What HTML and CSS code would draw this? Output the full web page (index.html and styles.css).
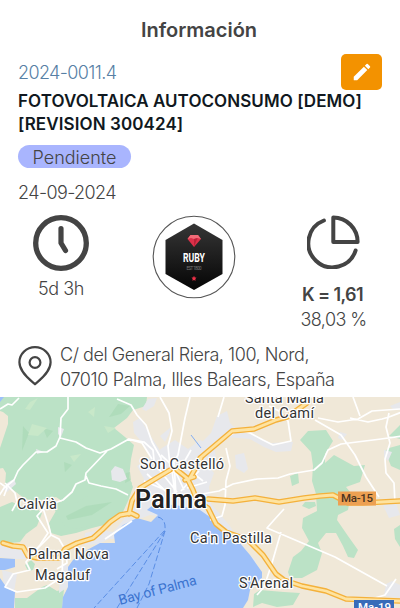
FILE: index.html
```html
<!DOCTYPE html>
<html lang="es">
<head>
<meta charset="utf-8">
<title>Información</title>
<link rel="stylesheet" href="styles.css">
</head>
<body>
<main class="screen">
  <h1 class="heading"><span>Información</span></h1>
  <section class="project">
    <button class="edit" aria-label="Editar">
      <svg width="22" height="22" viewBox="0 0 24 24"><path fill="#fff" d="M3 17.25V21h3.75L17.8 9.94l-3.75-3.75zM20.7 7.04a1 1 0 0 0 0-1.41l-2.34-2.34a1 1 0 0 0-1.41 0l-1.83 1.83 3.75 3.75z"/></svg>
    </button>
    <div class="code"><span>2024-0011.4</span></div>
    <div class="name"><span class="name-a">FOTOVOLTAICA AUTOCONSUMO [DEMO]</span><br><span class="name-b">[REVISION 300424]</span></div>
    <div class="badge"><span>Pendiente</span></div>
    <div class="date"><span>24-09-2024</span></div>
  </section>
  <section class="stats">
    <div class="stat time">
      <svg width="56" height="56" viewBox="0 0 56 56" fill="none" stroke="#444" stroke-linecap="round" stroke-linejoin="round"><circle cx="28" cy="28" r="25.3" stroke-width="5.3"/><path stroke-width="5.2" d="M28 13.5V28l4.5 7.5"/></svg>
      <span class="elapsed">5d 3h</span>
    </div>
    <div class="stat avatar">
      <svg width="84" height="84" viewBox="0 0 84 84">
        <defs><linearGradient id="hex" x1="0" y1="0" x2="0" y2="1"><stop offset="0" stop-color="#363636"/><stop offset="1" stop-color="#050505"/></linearGradient></defs>
        <circle cx="42" cy="42" r="40.8" fill="#fff" stroke="#555" stroke-width="1.1"/>
        <path fill="url(#hex)" d="M42 8.5 70.5 25v34L42 75 13.500 59V25z"/>
        <path fill="#dc3049" d="m35.500 24 3-4h7.500l3 4-7 8z"/><path fill="#f26b78" d="m35.500 24 3-4h7.500l3 4-3.500-1-3.500 1-3-1z"/><path fill="#b92239" d="m42 24 3.500-1-3.500 9z"/>
        <text class="logo-name" x="42" y="46.500" text-anchor="middle" textLength="22" lengthAdjust="spacingAndGlyphs">RUBY</text>
        <text class="logo-sub" x="42" y="54.500" text-anchor="middle" textLength="15">EST 1800</text>
        <path fill="#ee3048" d="m42 60.800.8 1.600 1.700.2-1.200 1.300.3 1.800-1.600-.8-1.600.8.3-1.800-1.200-1.300 1.700-.2z"/>
      </svg>
    </div>
    <div class="stat ratio">
      <svg width="54" height="54" viewBox="0 0 54 54" fill="none" stroke="#444" stroke-width="4" stroke-linecap="round" stroke-linejoin="round"><path d="M27 2.500V27h24.300A24.500 24.500 0 0 0 27 2.500zM17.600 5.500A24.200 24.200 0 1 0 49.300 35.500" transform="translate(-.7 0)"/></svg>
      <b class="factor">K = 1,61</b>
      <span class="percent">38,03 %</span>
    </div>
  </section>
  <section class="address">
    <svg width="34" height="40" viewBox="0 0 34 40" fill="none" stroke="#444" stroke-width="2.200" stroke-linejoin="round"><path d="M17 38.300C13 34.500 1.400 26.500 1.400 16.300a15.600 15.100 0 0 1 31.200 0C32.600 26.500 21 34.500 17 38.300z"/><circle cx="17" cy="16.500" r="5.400"/></svg>
    <div class="lines"><span class="line-a">C/ del General Riera, 100, Nord,</span><br><span class="line-b">07010 Palma, Illes Balears, España</span></div>
  </section>
  <svg class="map" width="400" height="211" viewBox="0 397 400 211">
    <rect y="397" width="400" height="211" fill="#f0e8d8"/>
    <g fill="#bbe2c6">
      <path d="M7 397H147l-1 9-13 4-6 8-13 10 11 9 9 8-3 14-2 19 4 9-5 14-6 13-14 10-16 4-16 5-15 3-10-3-2-10 8-14 5-8-6-4-20 4-11-2-13-10-7-4 1-12-3-5-8 1-8 5L0 470V448l8-24V416l-5-4-3-1V397z"/>
      <path d="M0 507l12-5 12 5 12 1 6 5-5 13-11 8-6 8L0 544zM31 560l4 4-2 6-5 1-3-6zM15 598l12 0 15-11 5-2 10 6 7-2-2 19H15z"/>
      <path d="M50 500l24 4 15-9 13-12 10-6 15-2 5 8-4 12-7 12-12 12-13 6-20 4-11-3-8-12z"/>
      <path d="M300 440l8-9 18-1 7 11-8 13v9l9-8 20 11 11-1-5 17-14 5 5 6-3 17-10 5-1 5 11 16 10 14-4 8-6-1-5-11-7-13-10 0-8 10 4 10-5 17-15 8-12 0-2-6 5-15 8-6 8-10-7-13 1-10 14-7-1-17-4-13 1-15-2-14zM290 476l8-3 1 10-7 3zM400 425v14l-11-3zM389 448l11-3v25l-9-4-6-15zM400 525v22l-5-8-1-10zM260 590l24 2 16 1-7 12-16 2-15-4-9 4 1-13zM305 502h10l1 4-7 3-7-3z"/>
    </g>
    <g fill="#a9d8b6" opacity=".65"><path d="M23 426l6 7-7 18zM66 516l20-10 26-4-20 13-24 5zM126 473l4-1 1 8-6 3zM64 462l8 3-7 7zM118 404l12 2-9 8-12 3zM43 428l10 3-6 7z"/></g>
    <g fill="#c8e8c9"><path d="M32 424l15 4-9 8-10-1zM70 456l11-2-7 8zM104 426l12 2-8 5zM30 402l8-4-8 12-5-1zM88 412l7-5-1 10z"/></g>
    <g fill="#e7e8ec">
      <path d="M148 399l9-1-3 8-8 5-4-2zM133 422l7-4 12 20 7 11 4 13-10-1-8-15-11-13zM111 471l4-5 8 3 4 10-7 3-8-2zM58 427l6 2-3 8-3-3zM36 449l8 3-7 2zM7 483l7-4 2 5-9 8-4-3zM160 436l11-9-2 7-4 8zM137 466l14-9 11-9 13-8 13 9 12-9 14 6 2 12-9 6 7 9-5 14 2 17 8 9 11 13 8 13 10 14 8 8-4 8-20-16-17-27-12-10-26-3-12 4-15-2-11 4-7-8 6-15 6-17z"/>
      <path d="M217 416l10-5 3 12 8 8 17 4 7 4 9 4 22-1-2 9-15 1-12-5-14-8-23-2-9 6-15 16-12 5-2-9 8-8 14-14zM235 455l9-2 4 16-4 4-8-5zM340 432l7 2-5 6-4-2zM384 450l8 2-4 9-4-4zM390 406l10-4v8l-7-1zM382 503l14 0 4 12-11 3zM0 543l13 4 11 4 5 8-13 0-16-2zM2 570l15 4-3 18-10-7zM85 533l15-3 13 2 12-14 10-1-1 8-13 14-12 0-10 5-15 1zM64 564l5 3-1 20-9 6 1-20zM386 584l6-3 8 4v13l-16-2z"/>
    </g>
    <g fill="#9dc0f9"><path d="M133 520l-10 5-9 10 1 8-15 0-13 7-14 10-5 7v20l-5 10-1 11H243l5-8 2-10 12-12v-6l-12-17-17-20-16-13-17-12-25-5-21-1-7 6 11 5-7 7-14-4zM0 558l15 1v8l-10 3-5 0zM0 578l7 10 8 4-1 16H0zM0 397h4l-4 5z"/></g>
    <g class="roads">
      <path d="M0 409l8-5 4 1 7-7M68 397v12l-7 9-1 19-4 9-9 6-11 0-13 13-5 6-4 9-10 8-7 11M60 438l16 4 10 6 14 5 11-4 18-10 15 3 9 8 1 10M107 451l-21 22-1 7-9 4-4 8-9 8-17 6-9 10 11 17-8 12-10 11M5 483l10 10 2 9-5 9M86 476l3 7 12 3 15 3 12 6M0 483l7 5-3 8M117 399l14 6 6 10 9 10 6 17 9 16 0 9M160 397l9 16 3 18-4 15 2 20M190 397l-5 21-7 37-8 14M128 439l14 4 10 16" />
      <path d="M224 397l-6 20M202 455l12-9 24-16 12 3 13 7 10 5 18-4-3-20-9-10-10-5M350 418l18 4 14-3 7-2 13-5 16 2 20-9 14 3M318 418l20 4 20-3 14-8 28-2M353 397l7 19M389 413l-3 14 4 16-5 16 1 14 8 10 1 21M315 420l26 15 14 20 11 22 13 20M202 494l17-3 14-7 24-5 21-1 12-4 24-4 8-7 6-13 13-6 40-5 28-4M226 448l4 18-4 15-1 24-3 11-12 4M284 509l-10 11-7 8 68 29 52 29M281 532l-9 31-8 24-7 8M396 579l-11 16-17 5" />
      <path d="M43 508l6 19 2 8-17 17-8 10 4 8-17 4-8 13 12 5 28-4 17-11 1-26M51 535l8 4 7 12 1 12-10 6M105 539l18-12 9-6M174 463l2 32M160 478l18-9M161 455l12 11 11 24M183 465l20 16M144 481l19 8M191 450l-12 21M147 474l24 22M158 468l19 24M172 470l3 26M199 471l-18 20M207 482l-20 6" stroke-width="1.200"/>
    </g>
    <path d="M158 517q8 2 7 13L94 608M165 531l-48 77M165 531l-16 53-12 24" fill="none" stroke="#5a8ee5" stroke-width="1" stroke-dasharray="6 2.500"/><path d="M191 435l10 13" fill="none" stroke="#83aef2"/>
    <g class="highway">
      <path id="w1" d="M3 543l10 3 10 1 5 9 9 2 22 0 6-9 12-6 16-5 9-8 8-8 10-7 11-2 6 3M129 514l3-13 8-13 20-12 10-6M200 458l32-27 22-2 22-9 11-3 20-14M177 470l10 8 6 12 4 11 11 7 8 16 10 8 22 8 15 15 13 19 8 6 18 6 24 5 20 8 54 2M194 477l-9 3M201 458l-11 20M208 499l25 2 22-3 24 4 25-4 16-2 13-1 15 8 15 0 37-2"/>
      <use href="#w1" class="core"/>
    </g>
    <rect x="338" y="491.500" width="38" height="14" fill="#eda052"/><rect x="354" y="600" width="40" height="13" fill="#376bb9"/>
    <g class="labels">
      <text x="245" y="403" textLength="79">Santa María</text>
      <text x="255" y="418" textLength="59">del Camí</text>
      <text x="140" y="468.500" textLength="84">Son Castelló</text>
      <text x="17" y="509" textLength="40">Calvià</text>
      <text x="28" y="558.500" textLength="81">Palma Nova</text>
      <text x="35" y="579.500" textLength="55">Magaluf</text>
      <text x="190" y="542.500" textLength="82">Ca'n Pastilla</text>
      <text x="239" y="587.500" textLength="54">S'Arenal</text>
      <text class="city" x="135" y="508" textLength="72">Palma</text>
    </g>
    <text class="bay" transform="translate(120 605) rotate(-15)" textLength="80">Bay of Palma</text>
    <text class="shield" x="341" y="502.300" textLength="32">Ma-15</text><text class="shield blue" x="358" y="611" textLength="33">Ma-19</text>
  </svg>
</main>
</body>
</html>
```
FILE: styles.css
```css
* { box-sizing: border-box; }
body { margin: 0; background: #fff; color: #444; font: 300 18px/24px Inter, "Liberation Sans", sans-serif; }
.screen { width: 400px; height: 608px; overflow: hidden; display: flex; flex-direction: column; }
.heading { margin: 0; padding-top: 18px; height: 60px; text-align: center; font-size: 20px; font-weight: 600; line-height: 24px; padding-right: 2px; }
.project { height: 150px; padding: 1px 18px 0; position: relative; white-space: nowrap; }
.edit { position: absolute; right: 18px; top: -6px; width: 41px; height: 36px; padding: 0; border: 0; border-radius: 5px; background: #f39200; display: flex; align-items: center; justify-content: center; }
.code { color: #577fa5; letter-spacing: -.62px; }
.name { margin-top: 5px; color: #101820; font-size: 17px; font-weight: 600; line-height: 22.5px; }
.name-a { letter-spacing: .07px; }
.name-b { letter-spacing: .1px; }
.badge { width: 113px; height: 23px; margin-top: 10px; border-radius: 12px; background: #a9b5fe; text-align: center; line-height: 25px; }
.date { margin-top: 13px; letter-spacing: -.6px; }
.stats { height: 132px; padding: 4px 0 0; display: grid; grid-template-columns: 122px 145px 133px; }
.stat { display: flex; flex-direction: column; align-items: center; white-space: nowrap; }
.time { padding-top: 1px; }
.elapsed { margin-top: 6px; letter-spacing: -.4px; }
.avatar { padding: .8px 1px 0 0; }
.ratio { padding-top: 1px; }
.factor { margin-top: 13px; font-weight: 600; line-height: 25px; letter-spacing: -.6px; padding-right: 2px; }
.percent { line-height: 25px; letter-spacing: -.6px; }
.address { height: 55px; padding: 0 18px; display: flex; gap: 8px; white-space: nowrap; }
.address svg { margin-top: 4px; }
.line-a { letter-spacing: -.45px; }
.line-b { letter-spacing: -.38px; }
.lines { line-height: 25px; }
.map { display: block; flex: none; }
.logo-name { font: 700 13px Roboto, sans-serif; fill: #fff; }
.logo-sub { font: 400 4.5px Roboto, sans-serif; fill: #777; }
.roads path { fill: none; stroke: #fff; stroke-width: 1.7; stroke-linejoin: round; }
.highway { fill: none; stroke: #f4b13b; stroke-width: 5.5; stroke-linejoin: round; stroke-linecap: round; }
.core { stroke: #fee3a0; stroke-width: 2.8; }
.labels text { font: 400 14.5px Roboto, sans-serif; fill: #333; stroke: #fff; stroke-width: 2.5px; stroke-linejoin: round; paint-order: stroke; }
.labels .city { font-size: 25px; font-weight: 600; fill: #222; }
.bay { font: 400 14px Roboto, sans-serif; fill: #3b73cf; }
.shield { font: 500 11.5px Roboto, sans-serif; fill: #493321; }
.shield.blue { fill: #fff; }
```
